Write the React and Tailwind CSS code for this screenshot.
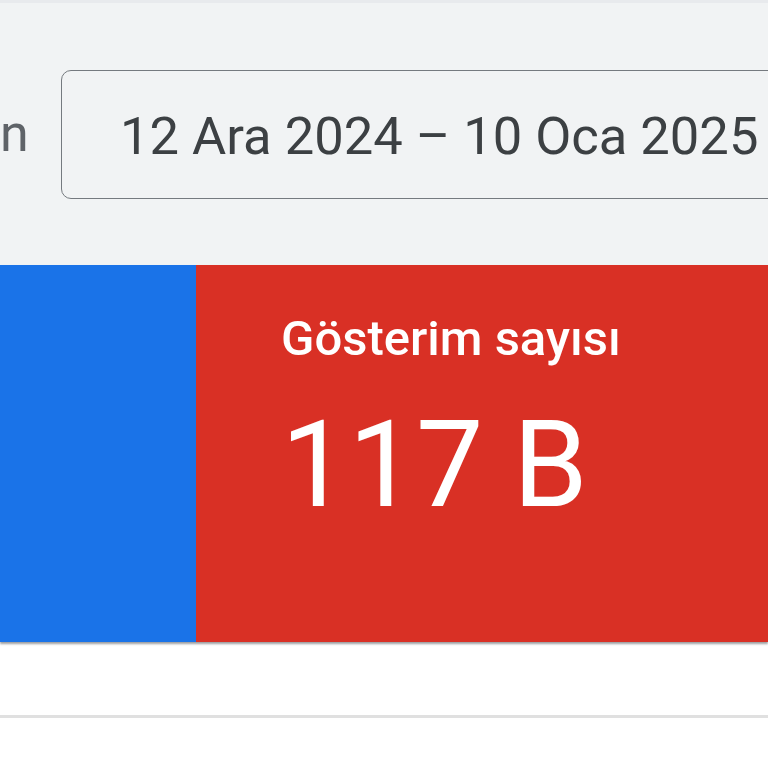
export default function App() {
  return (
    <div className="w-[768px] h-[768px] overflow-hidden bg-white font-['Roboto',sans-serif]">
      <div className="h-[265px] bg-[#f1f3f4] border-t-[3px] border-[#e8eaed] flex items-center">
        <span className="w-[30px] shrink-0 text-[52px] leading-none text-[#5f6368]">n</span>
        <div className="ml-[31px] shrink-0 w-[760px] h-[129px] rounded-[10px] border-[1.5px] border-[#757a7f] flex items-center pl-[58px] pt-[4px]">
          <span className="text-[52.5px] leading-none text-[#3c4043] whitespace-nowrap">12 Ara 2024 – 10 Oca 2025</span>
        </div>
      </div>
      <div className="h-[377px] flex shadow-[0_2px_2px_rgba(60,64,67,0.5)]">
        <div className="w-[196px] bg-[#1a73e8]" />
        <div className="flex-1 bg-[#d93025] pl-[85px] pt-[44px] text-white">
          <div className="text-[49px] leading-[60px] font-medium">Gösterim sayısı</div>
          <div className="mt-[36px] text-[120px] leading-none">117 B</div>
        </div>
      </div>
      <div className="h-[76px] border-b-[3px] border-[#e0e0e0]" />
    </div>
  );
}
